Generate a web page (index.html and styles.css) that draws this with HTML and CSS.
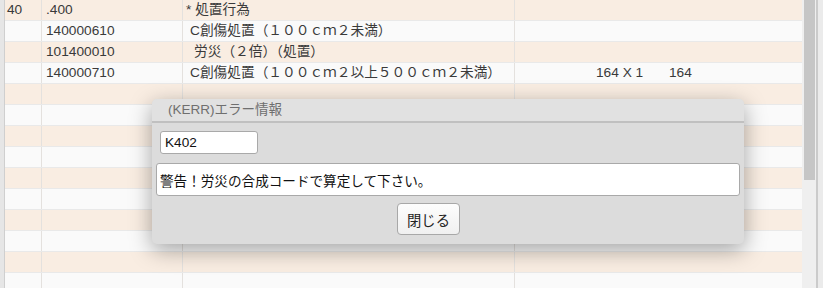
FILE: index.html
```html
<!DOCTYPE html>
<html lang="ja">
<head>
    <meta charset="UTF-8">
    <title>エラー情報</title>
    <link rel="stylesheet" href="styles.css">
</head>
<body>
    <div class="screen">
        <div class="gutter"></div>
        <div class="grid">
            <div class="row odd">
                <div class="cell c1">40</div>
                <div class="cell c2">.400</div>
                <div class="cell c3">* 処置行為</div>
                <div class="cell c4"></div>
            </div>
            <div class="row">
                <div class="cell c1"></div>
                <div class="cell c2">140000610</div>
                <div class="cell c3 ind1">C創傷処置（１００ｃｍ２未満）</div>
                <div class="cell c4"></div>
            </div>
            <div class="row odd">
                <div class="cell c1"></div>
                <div class="cell c2">101400010</div>
                <div class="cell c3 ind2">労災（２倍）（処置）</div>
                <div class="cell c4"></div>
            </div>
            <div class="row">
                <div class="cell c1"></div>
                <div class="cell c2">140000710</div>
                <div class="cell c3 ind1">C創傷処置（１００ｃｍ２以上５００ｃｍ２未満）</div>
                <div class="cell c4"><span class="qty">164 X 1</span><span class="pts">164</span></div>
            </div>
            <div class="row odd"><div class="cell c1"></div><div class="cell c2"></div><div class="cell c3"></div><div class="cell c4"></div></div>
            <div class="row"><div class="cell c1"></div><div class="cell c2"></div><div class="cell c3"></div><div class="cell c4"></div></div>
            <div class="row odd"><div class="cell c1"></div><div class="cell c2"></div><div class="cell c3"></div><div class="cell c4"></div></div>
            <div class="row"><div class="cell c1"></div><div class="cell c2"></div><div class="cell c3"></div><div class="cell c4"></div></div>
            <div class="row odd"><div class="cell c1"></div><div class="cell c2"></div><div class="cell c3"></div><div class="cell c4"></div></div>
            <div class="row"><div class="cell c1"></div><div class="cell c2"></div><div class="cell c3"></div><div class="cell c4"></div></div>
            <div class="row odd"><div class="cell c1"></div><div class="cell c2"></div><div class="cell c3"></div><div class="cell c4"></div></div>
            <div class="row"><div class="cell c1"></div><div class="cell c2"></div><div class="cell c3"></div><div class="cell c4"></div></div>
            <div class="row odd"><div class="cell c1"></div><div class="cell c2"></div><div class="cell c3"></div><div class="cell c4"></div></div>
            <div class="row"><div class="cell c1"></div><div class="cell c2"></div><div class="cell c3"></div><div class="cell c4"></div></div>
        </div>
        <div class="scrollbar">
            <div class="thumb"></div>
        </div>
        <div class="edge"></div>

        <!-- error dialog -->
        <div class="dialog">
            <div class="dialog-title">(KERR)エラー情報</div>
            <div class="dialog-body">
                <input class="code" type="text" value="K402" readonly>
                <input class="msg" type="text" value="警告！労災の合成コードで算定して下さい。" readonly>
                <button class="close-btn">閉じる</button>
            </div>
        </div>
    </div>
</body>
</html>
```

FILE: styles.css
```css
* {
    margin: 0;
    padding: 0;
    box-sizing: border-box;
}

body {
    font-family: 'Liberation Sans', 'Noto Sans CJK JP', sans-serif;
    font-size: 13.7px;
    color: #3a3a3a;
    background: #fafafa;
    width: 823px;
    height: 288px;
    overflow: hidden;
}

.screen {
    position: relative;
    display: flex;
    height: 288px;
}

.gutter {
    width: 5px;
    background: #e6e6e6;
    border-right: 1px solid #cfcfcf;
}

.grid {
    width: 797px;
    display: flex;
    flex-direction: column;
}

.row {
    display: flex;
    height: 21px;
    flex-shrink: 0;
    background: #fafafa;
    border-bottom: 1px solid #e9e9e9;
}

.row.odd {
    background: #f9ede2;
}

.cell {
    line-height: 20px;
    white-space: nowrap;
    border-right: 1px solid #e4e1de;
}

.c1 { width: 37px; padding-left: 2px; }
.c2 { width: 141px; padding-left: 4px; }
.c3 { width: 332px; padding-left: 3px; }
.c4 { flex: 1; border-right: none; display: flex; }

.c3.ind1 { padding-left: 7px; }
.c3.ind2 { padding-left: 11px; }

.qty {
    margin-left: 81px;
    width: 73px;
}

.scrollbar {
    width: 14px;
    background: #efefef;
    padding-left: 2px;
}

.thumb {
    width: 11px;
    height: 180px;
    background: #c6c6c6;
}

.edge {
    width: 7px;
    background: #ebebeb;
    border-left: 2px solid #cbcbcb;
}

/* dialog */
.dialog {
    position: absolute;
    left: 152px;
    top: 99px;
    width: 592px;
    height: 145px;
    background: #dcdcdc;
    border-radius: 5px;
    box-shadow: 0 6px 22px rgba(0, 0, 0, 0.35);
    overflow: hidden;
}

.dialog-title {
    height: 24px;
    line-height: 22px;
    padding-left: 16px;
    background: #e1e1e1;
    border-bottom: 2px solid #c0c0c0;
    color: #6f6f6f;
    font-size: 13.5px;
}

.dialog-body {
    display: flex;
    flex-direction: column;
    align-items: flex-start;
    padding: 8px 4px 0 4px;
}

.dialog-body input {
    font-family: inherit;
    font-size: 13.6px;
    color: #111;
    background: #fff;
    border: 1px solid #a9a9a9;
    border-radius: 3px;
    outline: none;
}

.code {
    margin-left: 4px;
    width: 98px;
    height: 23px;
    padding-left: 4px;
    font-size: 14px;
}

.msg {
    margin-top: 9px;
    width: 584px;
    height: 33px;
    padding-left: 3px;
}

.close-btn {
    margin-top: 7px;
    margin-left: 241px;
    width: 63px;
    height: 32px;
    font-family: inherit;
    font-size: 14.3px;
    color: #222;
    background: linear-gradient(#fdfdfd, #f0f0f0);
    border: 1px solid #a8a8a8;
    border-radius: 4px;
}
```
